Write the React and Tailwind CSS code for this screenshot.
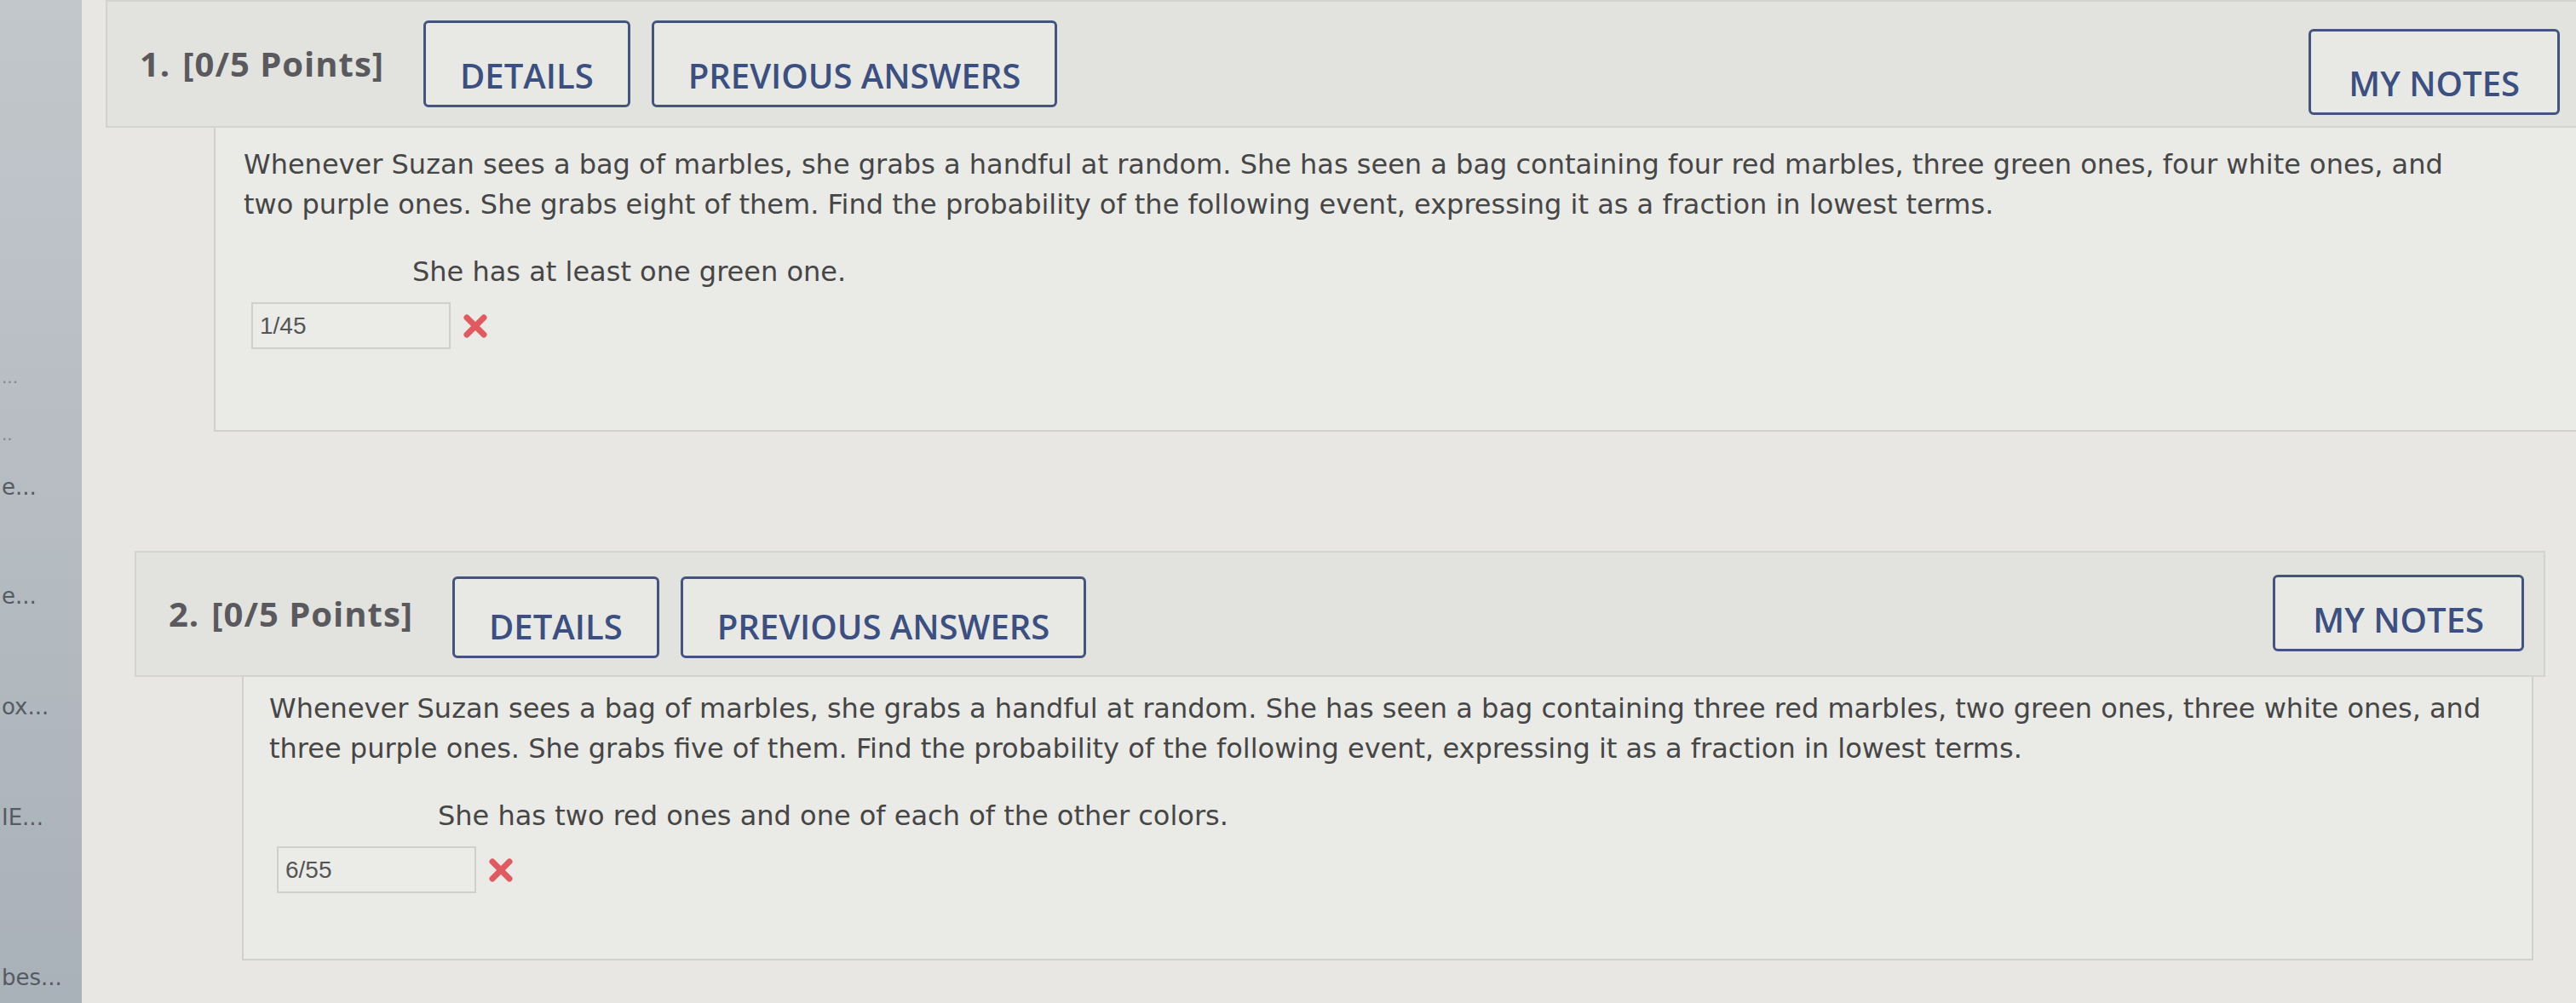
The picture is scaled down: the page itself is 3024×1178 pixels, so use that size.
import React from "react";

const questions = [
    {
        num: "1.",
        lines: [
            "Whenever Suzan sees a bag of marbles, she grabs a handful at random. She has seen a bag containing four red marbles, three green ones, four white ones, and",
            "two purple ones. She grabs eight of them. Find the probability of the following event, expressing it as a fraction in lowest terms.",
        ],
        event: "She has at least one green one.",
        answer: "1/45",
        wrap: "ml-[28px] mr-[-6px]",
        header: "h-[150px]",
        btn: "mt-[22px] h-[102px]",
        notes: "mt-[32px] h-[101px]",
        body: "h-[357px] pt-[20px] ml-[127px] pl-[33px]",
    },
    {
        num: "2.",
        lines: [
            "Whenever Suzan sees a bag of marbles, she grabs a handful at random. She has seen a bag containing three red marbles, two green ones, three white ones, and",
            "three purple ones. She grabs five of them. Find the probability of the following event, expressing it as a fraction in lowest terms.",
        ],
        event: "She has two red ones and one of each of the other colors.",
        answer: "6/55",
        wrap: "mt-[140px] ml-[62px] mr-[36px]",
        header: "h-[148px]",
        btn: "mt-[28px] h-[96px]",
        notes: "mt-[26px] h-[90px]",
        body: "h-[333px] pt-[14px] ml-[126px] pl-[30px] mr-[14px]",
    },
];

const sideItems = [
    { text: "...", cls: "mt-[423px] text-[#80878e] text-[20px]" },
    { text: "..", cls: "mt-[27px] text-[#80878e] text-[20px]" },
    { text: "e...", cls: "mt-[22px]" },
    { text: "e...", cls: "mt-[88px]" },
    { text: "ox...", cls: "mt-[90px]" },
    { text: "IE...", cls: "mt-[90px]" },
    { text: "bes...", cls: "mt-[148px]" },
];

function Button({ children, className = "" }) {
    return (
        <div
            className={
                "flex items-end justify-center pb-[14px] px-[40px] border-[3px] border-[#43557f] rounded-[6px] bg-[#e8e8e5] text-[#3b4f80] text-[40px] leading-none font-semibold whitespace-nowrap " +
                className
            }
            style={{ fontFamily: '"Open Sans", sans-serif' }}
        >
            {children}
        </div>
    );
}

function WrongMark() {
    return (
        <svg width="34" height="34" viewBox="0 0 34 34" className="ml-[12px]">
            <path
                d="M7 7 L27 27 M27 7 L7 27"
                stroke="#e25a61"
                strokeWidth="7"
                strokeLinecap="round"
            />
        </svg>
    );
}

function Question({ q }) {
    return (
        <div className={"flex flex-col " + q.wrap}>
            <div
                className={
                    "flex items-start pl-[38px] pr-[23px] bg-[#e2e2df] border-2 border-[#d3d3cf] " +
                    q.header
                }
            >
                <div
                    className="self-center text-[40px] font-bold text-[#5a595d] tracking-[1px] whitespace-nowrap"
                    style={{ fontFamily: '"Open Sans", sans-serif' }}
                >
                    <span className="mr-[14px]">{q.num}</span>[0/5 Points]
                </div>
                <Button className={"ml-[46px] " + q.btn}>DETAILS</Button>
                <Button className={"ml-[25px] " + q.btn}>PREVIOUS ANSWERS</Button>
                <div className="flex-1"></div>
                <Button className={"px-[44px] " + q.notes}>MY NOTES</Button>
            </div>
            <div
                className={
                    "border-2 border-t-0 border-[#d0d0cc] bg-[#eaeae7] text-[#464646] text-[32px] leading-[47px] " +
                    q.body
                }
                style={{ fontFamily: '"DejaVu Sans", Verdana, sans-serif' }}
            >
                {q.lines.map((line, i) => (
                    <div key={i} className="whitespace-nowrap">
                        {line}
                    </div>
                ))}
                <div className="mt-[32px] pl-[198px] whitespace-nowrap">
                    {q.event}
                </div>
                <div className="mt-[12px] ml-[9px] flex items-center">
                    <div
                        className="w-[234px] h-[55px] border-2 border-[#cfcfcb] bg-[#ebebe8] flex items-center pl-[8px] text-[28px] text-[#555]"
                        style={{ fontFamily: '"Liberation Sans", Arial, sans-serif' }}
                    >
                        {q.answer}
                    </div>
                    <WrongMark />
                </div>
            </div>
        </div>
    );
}

export default function App() {
    return (
        <div className="w-[3024px] h-[1178px] overflow-hidden flex bg-[#e8e7e4]">
            <div
                className="w-[96px] shrink-0 bg-gradient-to-b from-[#c2c7cb] to-[#a9b1b9] flex flex-col pl-[2px] text-[26px] text-[#555b62]"
                style={{ fontFamily: '"DejaVu Sans", Verdana, sans-serif' }}
            >
                {sideItems.map((item, i) => (
                    <div
                        key={i}
                        className={
                            "h-[40px] flex items-center whitespace-nowrap " +
                            item.cls
                        }
                    >
                        {item.text}
                    </div>
                ))}
            </div>
            <div className="flex-1 min-w-0 flex flex-col">
                {questions.map((q, i) => (
                    <Question key={i} q={q} />
                ))}
            </div>
        </div>
    );
}
